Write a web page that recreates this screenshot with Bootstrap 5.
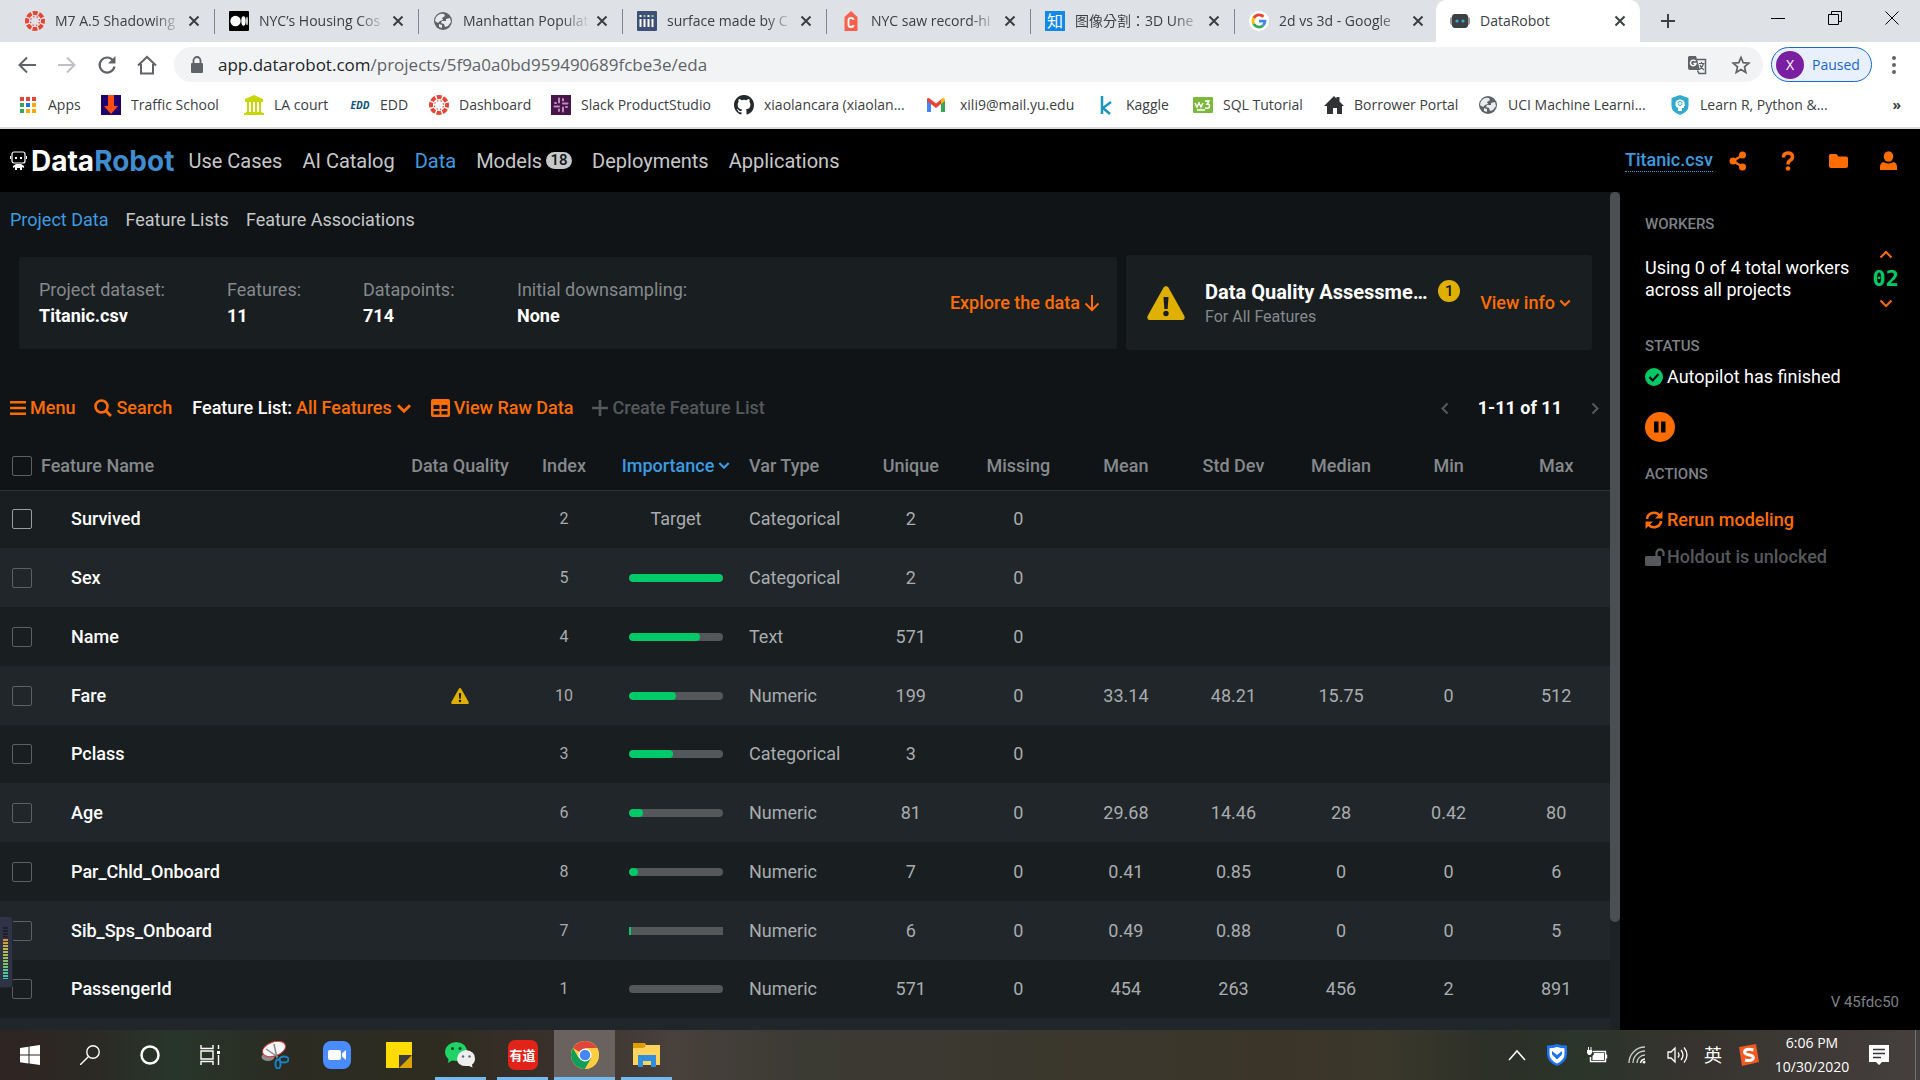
<!DOCTYPE html>
<html lang="en">
<head>
<meta charset="utf-8">
<meta name="viewport" content="width=device-width, initial-scale=1">
<title>DataRobot</title>
<link href="https://cdn.jsdelivr.net/npm/bootstrap@5.3.0/dist/css/bootstrap.min.css" rel="stylesheet">
<style>
:root{--orange:#ff6d00;--blue:#3b9ce0;--green:#00c968;--panel:#191e21;--page:#101417}
body{height:100vh;overflow:hidden;background:#000;font-family:Roboto,"Liberation Sans",sans-serif;font-size:18px;line-height:22px;color:#fff}
a{text-decoration:none;color:inherit}
svg{display:block;flex:none}
button{background:none;border:0;padding:0;color:inherit;font:inherit}
.os{font-family:"Open Sans","Noto Sans CJK TC",sans-serif}
/* browser */
.tabstrip{height:42px;background:#dee1e6;color:#3c4043;font-size:14px}
.btab{width:204px;height:42px;padding:0 4px 0 25px;position:relative}
.btab+.btab::before{content:"";position:absolute;left:10px;top:9px;width:1px;height:25px;background:#80868b}
.btab.now{background:#fff;border-radius:10px 10px 0 0;margin-left:8px;padding:0 14px}
.btab.now::before{display:none}
.tabtitle{flex:1;overflow:hidden;white-space:nowrap;margin:0 6px 0 10px}
.faded{-webkit-mask-image:linear-gradient(90deg,#000 78%,transparent);mask-image:linear-gradient(90deg,#000 78%,transparent)}
.favtext{width:20px;height:20px;font-size:16px;line-height:20px;text-align:center;flex:none;background:#0f88eb;color:#fff}
.newtab{padding:0 20px}
.wbtn{width:57px;height:36px;display:flex;align-items:center;justify-content:center;color:#000}
.toolbar{height:45px;background:#fff;color:#5f6368;padding:0 20px 0 16px}
.navbtns{gap:18px}
.omni{height:35px;border-radius:18px;background:#f1f3f4;padding:0 12px 0 14px}
.url{font-size:17px;flex:1}
.paused{height:35px;width:101px;border-radius:18px;border:1px solid #1967d2;background:#e8f0fe;color:#1967d2;font-size:14px}
.avatar{width:28px;height:28px;border-radius:50%;background:#7b1fa2;color:#fff;font-size:14px;line-height:28px;text-align:center}
.bookmarks{height:42px;background:#fff;border-bottom:2px solid #d9dce1;color:#3c4043;font-size:14px;padding:0 19px 4px 18px;display:grid;align-items:center;grid-template-columns:83px 143px 106px 79px 122px 183px 192px 170px 97px 131px 154px 192px 1fr auto;white-space:nowrap}
.bookmarks a{display:flex;align-items:center;gap:10px}
.bookmarks a.wide{gap:14px}
.edd{font:italic 700 10px/20px "Open Sans",sans-serif;color:#0b5573;width:20px;text-align:center}
/* application header */
.apphead{height:63px;background:#000;color:#c6c8c9;font-size:20px;padding-left:10px}
.brand{font:700 28px/28px Inter,sans-serif;color:#fff;margin:0 14px 0 4px}
.brand span{color:#3f8dcf}
.mainlinks{gap:20px}
.cnt{font-size:15px;line-height:17px;width:26px;border-radius:9px;background:#c6c8c9;color:#101417;text-align:center;font-weight:500}
.blue{color:var(--blue)}
.orange{color:var(--orange)}
.dotted{border-bottom:1px dotted var(--blue);font-size:18px;flex:none}
.headicons{width:295px;padding-right:7px}
.headicons button{width:50px;display:flex;justify-content:center}
/* main area */
.mainarea{background:var(--page);overflow:hidden}
.subnav{padding:17px 10px 0;color:#c6c8c9;height:63px;gap:17px}
.infobox{background:var(--panel);border-radius:3px}
.infobox dt{font-weight:400;color:#85898c;line-height:26px}
.infobox dd{margin:0;font-weight:700;line-height:26px}
.inforow{padding:0 18px 0 19px;gap:9px}
.facts{display:grid;grid-template-columns:188px 136px 154px 1fr;margin:0}
.dataset{height:92px;padding:0 17px 0 20px}
.dqa{width:466px;height:95px;padding:0 21px}
.dqtitle{font-size:20px;line-height:28px;font-weight:700}
.dqsub{font-size:16px;color:#85898c}
.md{font-weight:500}
.dim{color:#55595c}
.num1{width:22px;height:22px;border-radius:50%;background:#e0b000;color:#101417;font-size:15px;font-weight:500;text-align:center}
.tools{padding:0 10px;height:30px;margin-top:43px}
.tools>button+button{margin-left:19px}
.tools>span{margin:0 4px 0 20px}
.pagecount{padding:0 29px;font-weight:700}
.features{table-layout:fixed;width:100%;text-align:center;white-space:nowrap;margin-top:19px}
.features th{font-weight:500;color:#85898c;padding:0}
.features thead tr{height:48px;border-bottom:1px solid #2d3235}
.features tbody tr{height:59px;background:var(--panel)}
.features tbody tr:nth-child(even){background:#21262a}
.features tbody tr:nth-child(4n+1){height:58px}
.features tbody th{color:#fff;text-align:left}
.features th>div{display:flex;align-items:center;padding-left:12px}
.features thead label{padding-left:9px}
.features tbody label{padding-left:39px}
.features td{padding:0;color:#a9acae}
.features td.ix{font-size:16px}
.features th .form-check-input{width:20px;height:20px;margin:0;background-color:transparent;border:1px solid #5c6063;border-radius:2px;flex:none}
.features th .form-check-input.lit{border-color:#9a9d9f}
.features .lft{text-align:left;padding-left:1px}
.features .progress{height:8px;width:94px;border-radius:4px;background:#54585b;margin:0 auto}
.features .progress-bar{background:var(--green);border-radius:4px}
.c-name{width:396px}.c-dq{width:128px}.c-ix{width:80px}.c-imp{width:144px}.c-type{width:109px}
.scroll{width:10px;background:#1d2225}
.scroll div{height:730px;border-radius:5px;background:#4b4f52}
.side{width:300px;background:#000;padding:20px 21px 16px 25px}
.side h2{font-size:15px;line-height:24px;font-weight:500;color:#7d8184;margin:20px 0 0}
.side h2:first-child{margin:0}
.workers{margin-top:8px;height:70px}
.pause{margin-top:24px}
.rerun{margin-top:23px}
.holdout{margin-top:15px;gap:2px}
.version{font-size:15px;line-height:24px;color:#7d8184}
.digits{font:700 22px/24px "DejaVu Sans Mono",monospace;color:var(--green)}
/* desktop */
.edgewidget{position:absolute;left:0;top:916px;width:13px;height:72px;background:#2e3445;border:1px solid #20242f;border-left:0;border-radius:0 3px 3px 0;padding:10px 4px 8px 3px}
.edgewidget div{height:100%;background:repeating-linear-gradient(transparent 0 2px,#2e3445 2px 3px),linear-gradient(#1c202c 0 20%,#d68a35 22%,#c9b83e 40%,#8bc35a 65%,#35c5b0)}
.taskbar{height:50px;background:linear-gradient(90deg,#2f2421 0,#2b2a24 5%,#28362a 9%,#2b2b22 15%,#2e2c20 23%,#3a302b 29%,#48413c 35%,#3b3a33 42%,#3a3528 67%,#3a382b 72%,#2c2f27 78%,#2b3529 82%,#36332f 88%,#453f3d 100%)}
.tb{width:60px;height:50px;display:flex;align-items:center;justify-content:center}
.tb.app{width:62px}
.tb.open{border-bottom:3px solid #76b9ed;border-top:3px solid transparent;width:51px;margin:0 6px 0 5px}
.tb.open.cur{width:61px;margin:0 1px 0 0;background:#69625e;border-top-color:#69625e}
.youdao{width:30px;height:30px;border-radius:7px;background:#e2231a;color:#fff;font:700 13px/30px "Noto Sans CJK SC",sans-serif;text-align:center}
.tray{width:40px;display:flex;justify-content:center}
.ime{width:32px;font-size:18px;text-align:center}
.clock{font-size:14px;line-height:24px;width:86px;margin-right:3px;text-align:center}
.notes{width:58px;padding-right:16px;margin-right:4px}
</style>
<script src="https://cdn.jsdelivr.net/npm/bootstrap@5.3.0/dist/js/bootstrap.bundle.min.js"></script>
</head>
<body class="d-flex flex-column">
<svg width="0" height="0" class="position-absolute">
 <symbol id="x" viewBox="0 0 12 12"><path d="M1.500 1.500l9 9M10.500 1.500l-9 9" stroke="#3c4043" stroke-width="2"/></symbol>
 <symbol id="canvas" viewBox="0 0 20 20"><circle cx="10" cy="10" r="8" fill="none" stroke="#e64534" stroke-width="4" stroke-dasharray="4.800 1.483" stroke-dashoffset="2.400"/><circle cx="10" cy="10" r="4.500" fill="none" stroke="#e64534" stroke-width="1.300" stroke-dasharray="1.300 2.234" stroke-dashoffset="-1.100"/></symbol>
 <symbol id="globe" viewBox="0 0 20 20"><circle cx="10" cy="10" r="9" fill="#5f6368"/><path d="M4 5q3-3 7-2l1 2-3 2 1 2-3 1-2 2-3-2q0-3 2-5zM13 8l4-1 1 4-3 4-3 1-1-3-3-1 1-2 4 0zM6 13l3 1 0 3-3-1z" fill="#e9ebee"/></symbol>
 <symbol id="warn" viewBox="0 0 38 34"><path d="M16.600 1.600q2.400-3 4.800 0l16 28.400q1 3.800-2 4H2.600q-3-.2-2-4z" fill="#e0b000"/><path d="M16.500 11h5l-.8 12h-3.400z" fill="#191e21"/><circle cx="19" cy="27.500" r="2.700" fill="#191e21"/></symbol>
 <symbol id="down" viewBox="0 0 14 10"><path d="M1.500 2l5.500 5.500L12.500 2" fill="none" stroke="currentColor" stroke-width="2.500"/></symbol>
</svg>

<header class="os flex-shrink-0">
 <div class="tabstrip d-flex">
  <div class="btab d-flex align-items-center"><svg width="20" height="20"><use href="#canvas"/></svg><span class="tabtitle faded">M7 A.5 Shadowing</span><button aria-label="Close tab"><svg width="12" height="12"><use href="#x"/></svg></button></div>
  <div class="btab d-flex align-items-center"><svg width="20" height="20"><rect width="20" height="20" rx="1"/><circle cx="6.500" cy="10" r="5.200" fill="#fff"/><ellipse cx="14.500" cy="10" rx="2.200" ry="4.800" fill="#fff"/><ellipse cx="18" cy="10" rx=".8" ry="4.300" fill="#fff"/></svg><span class="tabtitle faded">NYC’s Housing Cos</span><button aria-label="Close tab"><svg width="12" height="12"><use href="#x"/></svg></button></div>
  <div class="btab d-flex align-items-center"><svg width="20" height="20"><use href="#globe"/></svg><span class="tabtitle faded">Manhattan Populat</span><button aria-label="Close tab"><svg width="12" height="12"><use href="#x"/></svg></button></div>
  <div class="btab d-flex align-items-center"><svg width="20" height="20"><rect width="20" height="20" rx="1" fill="#3f4f75"/><path d="M3.500 8v8M7.500 8v8M11.500 8v8M15.500 8v8M3.500 4v2M11.500 4v2" stroke="#fff" stroke-width="2"/><path d="M7.500 4v2M15.500 4v2" stroke="#80cfbe" stroke-width="2"/></svg><span class="tabtitle faded">surface made by C</span><button aria-label="Close tab"><svg width="12" height="12"><use href="#x"/></svg></button></div>
  <div class="btab d-flex align-items-center"><svg width="20" height="20"><path d="M3.500 6L10 0l6.500 6v14h-13z" fill="#f9604c"/><path d="M12.500 9q0-2-2.500-2T7.500 9v5q0 2 2.500 2t2.500-2" fill="none" stroke="#fff" stroke-width="1.800"/></svg><span class="tabtitle faded">NYC saw record-hi</span><button aria-label="Close tab"><svg width="12" height="12"><use href="#x"/></svg></button></div>
  <div class="btab d-flex align-items-center"><span class="favtext">知</span><span class="tabtitle faded">图像分割：3D Une</span><button aria-label="Close tab"><svg width="12" height="12"><use href="#x"/></svg></button></div>
  <div class="btab d-flex align-items-center"><svg width="20" height="20" viewBox="0 0 20 20"><circle cx="10" cy="10" r="10" fill="#fff"/><g fill="none" stroke-width="2.800"><path d="M14.500 5.800A6 6 0 0 0 4.800 7" stroke="#ea4335"/><path d="M4.800 7a6 6 0 0 0 0 6" stroke="#fbbc05"/><path d="M4.800 13a6 6 0 0 0 9.200 1.500" stroke="#34a853"/><path d="M14 14.500a6 6 0 0 0 2-4.400h-6" stroke="#4285f4"/></g></svg><span class="tabtitle faded">2d vs 3d - Google</span><button aria-label="Close tab"><svg width="12" height="12"><use href="#x"/></svg></button></div>
  <div class="btab now d-flex align-items-center"><svg width="20" height="20"><rect y="6" width="20" height="8" rx="2" fill="#999"/><rect x="2" y="3" width="16" height="14" rx="3" fill="#3c4043"/><circle cx="7" cy="10" r="1.600" fill="#36a9e1"/><circle cx="13" cy="10" r="1.600" fill="#36a9e1"/></svg><span class="tabtitle">DataRobot</span><button aria-label="Close tab"><svg width="12" height="12"><use href="#x"/></svg></button></div>
  <button class="newtab" aria-label="New tab"><svg width="16" height="16"><path d="M8 1v14M1 8h14" stroke="#3c4043" stroke-width="2"/></svg></button>
  <div class="d-flex ms-auto">
   <button class="wbtn" aria-label="Minimize"><svg width="14" height="14"><path d="M0 7.500h14" stroke="#000"/></svg></button>
   <button class="wbtn" aria-label="Restore"><svg width="14" height="14"><path d="M.5 3.500h10v10H.5zM3.500 3V.5h10v10H11" fill="none" stroke="#000"/></svg></button>
   <button class="wbtn" aria-label="Close"><svg width="14" height="14"><path d="M.5.5l13 13M13.500.5l-13 13" stroke="#000"/></svg></button>
  </div>
 </div>

 <div class="toolbar d-flex align-items-center">
  <div class="navbtns d-flex align-items-center">
   <button aria-label="Back"><svg width="22" height="20"><path d="M20 10H4M11 2.500L3.500 10 11 17.500" fill="none" stroke="#5f6368" stroke-width="2"/></svg></button>
   <button aria-label="Forward"><svg width="22" height="20"><path d="M2 10h16M11 2.500l7.500 7.500-7.500 7.500" fill="none" stroke="#bdc1c6" stroke-width="2"/></svg></button>
   <button aria-label="Reload"><svg width="22" height="20"><path d="M17.500 6A7.500 7.500 0 1 0 18.500 11.500" fill="none" stroke="#5f6368" stroke-width="2.200"/><path d="M19.500 1v7.500H12z" fill="#5f6368"/></svg></button>
   <button aria-label="Home"><svg width="22" height="20"><path d="M2 10.500L11 2l9 8.500M5 9v9.500h12V9" fill="none" stroke="#5f6368" stroke-width="2"/></svg></button>
  </div>
  <div class="omni d-flex align-items-center flex-grow-1 ms-3 me-2">
   <svg width="18" height="20"><rect x="3" y="8" width="12" height="10" rx="1" fill="#5f6368"/><path d="M5.500 8V5.500a3.500 3.500 0 0 1 7 0V8" fill="none" stroke="#5f6368" stroke-width="1.800"/></svg>
   <a class="url ps-2 ms-1" href="#"><span class="text-dark">app.datarobot.com</span>/projects/5f9a0a0bd959490689fcbe3e/eda</a>
   <button aria-label="Translate" class="me-4"><svg width="20" height="20"><path d="M2 1h7l4 14H3q-2 0-2-2V2z" fill="#5f6368"/><path d="M10 4.500h8.500v14H12l-1.500-3" fill="none" stroke="#5f6368" stroke-width="1.500"/><path d="M8.500 6.200A2.800 2.800 0 1 0 9 8.500H6.500" fill="none" stroke="#fff" stroke-width="1.400"/><path d="M12 8.500h5.500M14.500 7v1.500M16.500 8.500q-1 4-4 6M13 10q1 3 4 5" fill="none" stroke="#5f6368" stroke-width="1.200"/></svg></button>
   <button aria-label="Bookmark"><svg width="20" height="20"><path d="M10 2.500l2.200 5.200 5.600.5-4.300 3.700 1.300 5.500L10 14.500l-4.800 2.900 1.300-5.500L2.200 8.200l5.600-.5z" fill="none" stroke="#5f6368" stroke-width="1.700"/></svg></button>
  </div>
  <button class="paused d-flex align-items-center ps-1"><span class="avatar me-2">X</span><span>Paused</span></button>
  <button aria-label="Chrome menu" class="ps-3"><svg width="12" height="22"><g fill="#5f6368"><circle cx="6" cy="4" r="2"/><circle cx="6" cy="11" r="2"/><circle cx="6" cy="18" r="2"/></g></svg></button>
 </div>

 <nav class="bookmarks">
  <a href="#"><svg width="20" height="20"><path d="M2 2h4v4H2zM8 2h4v4H8zM14 2h4v4h-4z" fill="#ea4335"/><path d="M2 8h4v4H2z" fill="#34a853"/><path d="M8 8h4v4H8z" fill="#1a73e8"/><path d="M14 8h4v4h-4zM8 14h4v4H8zM14 14h4v4h-4z" fill="#fbaa05"/><path d="M2 14h4v4H2z" fill="#34a853"/></svg>Apps</a>
  <a href="#"><svg width="20" height="20"><rect width="20" height="20" fill="#21006e"/><path d="M7 0h6v11h4l-7 8-7-8h4z" fill="#ff4d12"/></svg>Traffic School</a>
  <a href="#"><svg width="20" height="20"><path d="M10 0l9 4v3H1V4zM2 17h16v1H2zM0 18h20v2H0zM3 7h2v10H3zM7 7h2v10H7zM11 7h2v10h-2zM15 7h2v10h-2z" fill="#c8d60a"/></svg>LA court</a>
  <a href="#"><span class="edd" aria-hidden="true">EDD</span>EDD</a>
  <a href="#"><svg width="20" height="20"><use href="#canvas"/></svg>Dashboard</a>
  <a href="#"><svg width="20" height="20"><rect width="20" height="20" fill="#481449"/><g stroke="#b98cb9" stroke-width="2" stroke-linecap="round"><path d="M8 3.500v4M12 8.500h4.500M12 12.500v4M3.500 11.500H8M12 4v1.500M15 12h1M8 14.500V16M4 8h1"/></g></svg>Slack ProductStudio</a>
  <a href="#"><svg width="20" height="20" viewBox="0 0 16 16"><path fill="#24292e" d="M8 0C3.580 0 0 3.580 0 8c0 3.540 2.290 6.530 5.470 7.590.4.070.55-.17.55-.38 0-.19-.01-.82-.01-1.490-2.010.37-2.530-.49-2.690-.94-.09-.23-.48-.94-.82-1.130-.28-.15-.68-.52-.01-.53.63-.01 1.080.58 1.230.82.72 1.210 1.870.87 2.330.66.070-.52.280-.87.510-1.070-1.780-.2-3.640-.89-3.640-3.950 0-.87.310-1.590.82-2.150-.08-.2-.36-1.020.08-2.120 0 0 .67-.21 2.200.82a7.600 7.600 0 0 1 4 0c1.530-1.040 2.200-.82 2.200-.82.440 1.100.160 1.920.080 2.120.510.560.820 1.270.820 2.150 0 3.070-1.870 3.750-3.650 3.950.290.250.540.730.540 1.480 0 1.070-.01 1.930-.01 2.200 0 .21.150.46.550.38A8 8 0 0 0 16 8c0-4.420-3.580-8-8-8z"/></svg>xiaolancara (xiaolan...</a>
  <a class="wide" href="#"><svg width="20" height="20"><path d="M1 5v12h4V8z" fill="#4285f4"/><path d="M19 5v12h-4V8z" fill="#34a853"/><path d="M1 3.500l2-.5 7 5.500L17 3l-2 6-5 4-9-7z" fill="#ea4335"/><path d="M15 5l2.500-2Q19 3 19 5v1l-4 3z" fill="#fbbc04"/></svg>xili9@mail.yu.edu</a>
  <a href="#"><svg width="20" height="20"><path d="M6 1v18M15 7l-8 6 7 6" fill="none" stroke="#1c95c0" stroke-width="2.500"/></svg>Kaggle</a>
  <a href="#"><svg width="20" height="20"><rect y="2" width="20" height="16" rx="1" fill="#7cb83b"/><path d="M2 8l2 4 2-4 2 4 2-4M12 6h4l-2 3q3 0 2.500 2.500T12 13M4 15h8" fill="none" stroke="#fff" stroke-width="1.500"/></svg>SQL Tutorial</a>
  <a href="#"><svg width="20" height="20"><path d="M10 1l2.500 2.500V2h3v4.500L20 11h-2v8h-5v-6H9v6H3v-8H0z" fill="#303236"/></svg>Borrower Portal</a>
  <a href="#"><svg width="20" height="20"><use href="#globe"/></svg>UCI Machine Learni...</a>
  <a href="#"><svg width="20" height="20"><path d="M10 0l8.500 3v8q0 6-8.500 9-8.500-3-8.500-9V3z" fill="#33aacc"/><path d="M8 16v-3q-3-1.500-2.500-5T10 4.500 14.500 8l.5 3h-1v2h-2v3z" fill="#fff"/><circle cx="10" cy="8.500" r="2" fill="none" stroke="#33aacc"/></svg>Learn R, Python &amp;...</a>
  <button class="fw-bold" aria-label="More bookmarks">»</button>
 </nav>
</header>

<nav class="apphead d-flex align-items-center flex-shrink-0">
 <svg width="17" height="20"><rect x="2" y="1" width="13" height="11" rx="2" fill="none" stroke="#fff" stroke-width="1.200"/><path d="M0 5h1v3H0zM16 5h1v3h-1zM5 6h2v2H5zM10 6h2v2h-2zM6 13h5l3 2v2l-2-1v3h-2v-2H7v2H5v-3l-2 1v-2z" fill="#fff"/></svg>
 <a class="brand" href="#">Data<span>Robot</span></a>
 <div class="mainlinks d-flex align-items-center">
  <a href="#">Use Cases</a><a href="#">AI Catalog</a><a class="blue" href="#">Data</a>
  <a class="d-flex align-items-center gap-1" href="#">Models <span class="cnt">18</span></a>
  <a href="#">Deployments</a><a href="#">Applications</a>
 </div>
 <div class="headicons ms-auto d-flex align-items-center justify-content-between orange">
  <a class="blue md dotted" href="#">Titanic.csv</a>
  <div class="d-flex align-items-center">
   <button aria-label="Share"><svg width="18" height="20"><path d="M14 4L4 10l10 6" fill="none" stroke="currentColor" stroke-width="2.500"/><g fill="currentColor"><circle cx="13.500" cy="4" r="3.500"/><circle cx="4" cy="10" r="3.500"/><circle cx="13.500" cy="16" r="3.500"/></g></svg></button>
   <button aria-label="Help"><svg width="14" height="20"><path d="M2.500 6.500Q2.500 2 7 2t4.500 4q0 2.200-2.500 3.500Q7 10.700 7 13.500" fill="none" stroke="currentColor" stroke-width="3.500"/><circle cx="7" cy="17.500" r="2.300" fill="currentColor"/></svg></button>
   <button aria-label="Files"><svg width="19" height="16"><path d="M1.500 1h6l2 2.500H17q2 0 2 2V13q0 2-2 2H2q-2 0-2-2V2.500Q0 1 1.500 1z" fill="currentColor"/></svg></button>
   <button aria-label="Account"><svg width="17" height="20"><ellipse cx="8.500" cy="5.500" rx="4.800" ry="5.200" fill="currentColor"/><path d="M3.500 11q5 3 10 0 3.500 1 3.500 5v3H0v-3q0-4 3.500-5z" fill="currentColor"/></svg></button>
  </div>
 </div>
</nav>

<div class="d-flex flex-grow-1 overflow-hidden">
 <main class="mainarea flex-grow-1">
  <nav class="subnav d-flex"><a class="blue" href="#">Project Data</a><a href="#">Feature Lists</a><a href="#">Feature Associations</a></nav>
  <div class="inforow d-flex align-items-center">
   <section class="infobox dataset d-flex align-items-center flex-grow-1">
    <dl class="facts flex-grow-1">
     <div><dt>Project dataset:</dt><dd>Titanic.csv</dd></div>
     <div><dt>Features:</dt><dd>11</dd></div>
     <div><dt>Datapoints:</dt><dd>714</dd></div>
     <div><dt>Initial downsampling:</dt><dd>None</dd></div>
    </dl>
    <button class="orange md d-flex align-items-center gap-1">Explore the data <svg width="16" height="18"><path d="M8 1v15M1.500 9.500L8 16l6.500-6.500" fill="none" stroke="currentColor" stroke-width="2"/></svg></button>
   </section>
   <section class="infobox dqa d-flex align-items-center">
    <svg width="38" height="34"><use href="#warn"/></svg>
    <div class="ps-3 ms-1 me-auto"><div class="dqtitle">Data Quality Assessme…</div><div class="dqsub">For All Features</div></div>
    <span class="num1 mb-4">1</span>
    <button class="orange md d-flex align-items-center gap-1 ps-3 ms-1">View info <svg width="12" height="10"><use href="#down"/></svg></button>
   </section>
  </div>

  <div class="tools d-flex align-items-center md orange">
   <button class="d-flex align-items-center gap-1"><svg width="16" height="16"><path d="M0 2.200h16M0 8h16M0 13.800h16" stroke="currentColor" stroke-width="2.600"/></svg>Menu</button>
   <button class="d-flex align-items-center gap-1"><svg width="18" height="18"><circle cx="7.500" cy="7.500" r="6" fill="none" stroke="currentColor" stroke-width="2.600"/><path d="M12 12l5 5" stroke="currentColor" stroke-width="3"/></svg>Search</button>
   <span class="text-white">Feature List:</span>
   <button class="d-flex align-items-center gap-1">All Features <svg width="16" height="11"><use href="#down"/></svg></button>
   <button class="d-flex align-items-center gap-1"><svg width="19" height="18"><path d="M2 0h15q2 0 2 2v14q0 2-2 2H2q-2 0-2-2V2Q0 0 2 0zM2.500 6V10h6V6zm8 0V10h6V6zm-8 6V15.500h6v-3.500zm8 0V15.500h6v-3.500z" fill="currentColor" fill-rule="evenodd"/></svg>View Raw Data</button>
   <button class="dim d-flex align-items-center gap-1" disabled><svg width="16" height="16"><path d="M8 0v16M0 8h16" stroke="currentColor" stroke-width="2.600"/></svg>Create Feature List</button>
   <div class="ms-auto d-flex align-items-center text-white">
    <button class="dim" aria-label="Previous page"><svg width="9" height="13"><path d="M7.500 1.500l-5 5 5 5" fill="none" stroke="currentColor" stroke-width="2"/></svg></button>
    <span class="pagecount">1-11 of 11</span>
    <button class="dim" aria-label="Next page"><svg width="9" height="13"><path d="M1.500 1.500l5 5-5 5" fill="none" stroke="currentColor" stroke-width="2"/></svg></button>
   </div>
  </div>

  <table class="features">
   <colgroup><col class="c-name"><col class="c-dq"><col class="c-ix"><col class="c-imp"><col class="c-type"><col><col><col><col><col><col><col></colgroup>
   <thead><tr>
    <th><div><input id="all" type="checkbox" class="form-check-input"><label for="all">Feature Name</label></div></th>
    <th>Data Quality</th><th>Index</th><th><button class="blue d-inline-flex align-items-center gap-1">Importance <svg width="12" height="9"><use href="#down"/></svg></button></th><th class="lft">Var Type</th><th>Unique</th><th>Missing</th><th>Mean</th><th>Std Dev</th><th>Median</th><th>Min</th><th>Max</th>
   </tr></thead>
   <tbody>
    <tr><th><div><input id="f1" type="checkbox" class="form-check-input lit"><label for="f1">Survived</label></div></th><td></td><td class="ix">2</td><td>Target</td><td class="lft">Categorical</td><td>2</td><td>0</td><td></td><td></td><td></td><td></td><td></td></tr>
    <tr><th><div><input id="f2" type="checkbox" class="form-check-input"><label for="f2">Sex</label></div></th><td></td><td class="ix">5</td><td><div class="progress"><div class="progress-bar" style="width:100%"></div></div></td><td class="lft">Categorical</td><td>2</td><td>0</td><td></td><td></td><td></td><td></td><td></td></tr>
    <tr><th><div><input id="f3" type="checkbox" class="form-check-input"><label for="f3">Name</label></div></th><td></td><td class="ix">4</td><td><div class="progress"><div class="progress-bar" style="width:76%"></div></div></td><td class="lft">Text</td><td>571</td><td>0</td><td></td><td></td><td></td><td></td><td></td></tr>
    <tr><th><div><input id="f4" type="checkbox" class="form-check-input"><label for="f4">Fare</label></div></th><td><svg class="mx-auto" width="18" height="16"><use href="#warn"/></svg></td><td class="ix">10</td><td><div class="progress"><div class="progress-bar" style="width:50%"></div></div></td><td class="lft">Numeric</td><td>199</td><td>0</td><td>33.14</td><td>48.21</td><td>15.75</td><td>0</td><td>512</td></tr>
    <tr><th><div><input id="f5" type="checkbox" class="form-check-input"><label for="f5">Pclass</label></div></th><td></td><td class="ix">3</td><td><div class="progress"><div class="progress-bar" style="width:47%"></div></div></td><td class="lft">Categorical</td><td>3</td><td>0</td><td></td><td></td><td></td><td></td><td></td></tr>
    <tr><th><div><input id="f6" type="checkbox" class="form-check-input"><label for="f6">Age</label></div></th><td></td><td class="ix">6</td><td><div class="progress"><div class="progress-bar" style="width:15%"></div></div></td><td class="lft">Numeric</td><td>81</td><td>0</td><td>29.68</td><td>14.46</td><td>28</td><td>0.42</td><td>80</td></tr>
    <tr><th><div><input id="f7" type="checkbox" class="form-check-input"><label for="f7">Par_Chld_Onboard</label></div></th><td></td><td class="ix">8</td><td><div class="progress"><div class="progress-bar" style="width:10%"></div></div></td><td class="lft">Numeric</td><td>7</td><td>0</td><td>0.41</td><td>0.85</td><td>0</td><td>0</td><td>6</td></tr>
    <tr><th><div><input id="f8" type="checkbox" class="form-check-input"><label for="f8">Sib_Sps_Onboard</label></div></th><td></td><td class="ix">7</td><td><div class="progress rounded-0"><div class="progress-bar rounded-0" style="width:2%"></div></div></td><td class="lft">Numeric</td><td>6</td><td>0</td><td>0.49</td><td>0.88</td><td>0</td><td>0</td><td>5</td></tr>
    <tr><th><div><input id="f9" type="checkbox" class="form-check-input"><label for="f9">PassengerId</label></div></th><td></td><td class="ix">1</td><td><div class="progress"></div></td><td class="lft">Numeric</td><td>571</td><td>0</td><td>454</td><td>263</td><td>456</td><td>2</td><td>891</td></tr>
    <tr><td colspan="12"></td></tr>
   </tbody>
  </table>
 </main>
 <div class="scroll flex-shrink-0"><div></div></div>
 <aside class="side d-flex flex-column flex-shrink-0">
  <h2>WORKERS</h2>
  <div class="workers d-flex justify-content-between align-items-center">
   <div>Using 0 of 4 total workers<br>across all projects</div>
   <div class="d-flex flex-column align-items-center orange gap-2">
    <button aria-label="More workers"><svg width="14" height="10"><path d="M1.500 8.500L7 3l5.500 5.500" fill="none" stroke="currentColor" stroke-width="2"/></svg></button>
    <span class="digits">02</span>
    <button aria-label="Fewer workers"><svg width="14" height="10"><path d="M1.500 1.500L7 7l5.500-5.500" fill="none" stroke="currentColor" stroke-width="2"/></svg></button>
   </div>
  </div>
  <h2>STATUS</h2>
  <div class="d-flex align-items-center gap-1 mt-2"><svg width="18" height="18"><circle cx="9" cy="9" r="9" fill="#00c968"/><path d="M4.500 9l3.200 3.500 5.800-6.500" fill="none" stroke="#000" stroke-width="2"/></svg>Autopilot has finished</div>
  <button aria-label="Pause" class="pause align-self-start"><svg width="30" height="30"><circle cx="15" cy="15" r="15" fill="#ff6d00"/><path d="M9 9.500h4.500v11H9zM16 9.500h4.500v11H16z" fill="#000"/></svg></button>
  <h2>ACTIONS</h2>
  <button class="rerun orange md d-flex align-items-center gap-1"><svg width="18" height="18"><path d="M2 8a7 7 0 0 1 12.500-3.500M16 10a7 7 0 0 1-12.500 3.500" fill="none" stroke="currentColor" stroke-width="2.500"/><path d="M17.500 0v7.500H10zM.5 18v-7.500H8z" fill="currentColor"/></svg>Rerun modeling</button>
  <div class="holdout dim md d-flex align-items-center"><svg width="20" height="18"><rect y="8" width="16" height="10" rx="1.500" fill="currentColor"/><path d="M11.500 8V5a3.500 3.500 0 0 1 7 0v3" fill="none" stroke="currentColor" stroke-width="2.300"/></svg>Holdout is unlocked</div>
  <div class="version mt-auto text-end">V 45fdc50</div>
 </aside>
</div>

<div class="edgewidget"><div></div></div>

<footer class="taskbar os d-flex align-items-center flex-shrink-0">
 <button class="tb" aria-label="Start"><svg width="20" height="20"><path d="M0 3l8.500-1.300V9.500H0zM9.500 1.500L20 0v9.500H9.500zM0 10.500h8.500v8L0 17.300zM9.500 10.500H20V20L9.500 18.600z" fill="#fff"/></svg></button>
 <button class="tb" aria-label="Search"><svg width="20" height="20"><circle cx="13" cy="7" r="6.200" fill="none" stroke="#fff" stroke-width="1.400"/><path d="M8.500 11.500L0 20" stroke="#fff" stroke-width="1.400"/></svg></button>
 <button class="tb" aria-label="Cortana"><svg width="20" height="20"><circle cx="10" cy="10" r="8.500" fill="none" stroke="#fff" stroke-width="2.500"/></svg></button>
 <button class="tb" aria-label="Task view"><svg width="21" height="20"><path d="M1 0v3.500h12V0M1 20v-3.500h12V20M1 6h12v8H1zM18.500 0v4M18.500 10v10" fill="none" stroke="#fff" stroke-width="1.400"/><path d="M17 6h3v3h-3z" fill="#fff"/></svg></button>
 <button class="tb app ms-1" aria-label="Snipping Tool"><svg width="28" height="28"><ellipse cx="7" cy="16" rx="6.500" ry="4" fill="#8d8d8d"/><ellipse cx="13" cy="8" rx="12" ry="7" transform="rotate(-20 13 8)" fill="#f7f7f7" stroke="#d43b3b"/><path d="M5 8l12 8M13 3l3 14" stroke="#888" stroke-width="1.500"/><g fill="none" stroke="#1a82c4" stroke-width="2"><ellipse cx="23" cy="18.500" rx="4.500" ry="3"/><ellipse cx="17" cy="23" rx="2.500" ry="4.500"/></g></svg></button>
 <button class="tb app" aria-label="Zoom"><svg width="28" height="28"><rect width="28" height="28" rx="8" fill="#4a8cff"/><rect x="5" y="9" width="13" height="10" rx="2" fill="#fff"/><path d="M19 12.500l4-3.500v10l-4-3.500z" fill="#fff"/></svg></button>
 <button class="tb app" aria-label="Sticky Notes"><svg width="26" height="26"><path d="M0 0h26v26H0z" fill="#ffdb00"/><path d="M13 26V13h13v13z" fill="#d9a500"/><path d="M13 13h13L13 26z" fill="#3b3b3b"/></svg></button>
 <button class="tb open" aria-label="WeChat"><svg width="31" height="26"><path d="M11 0Q22 1 22 10t-11 9l-4-.5L3 21l.5-4Q0 14 0 9.500 1 1 11 0z" fill="#20d366"/><circle cx="7.500" cy="6.500" r="1.500" fill="#124c28"/><circle cx="15" cy="6.500" r="1.500" fill="#124c28"/><path d="M21 8q9 1 9 8.500 0 4-3 6l.5 3-3.500-1.500Q12 25 12 16.500 13 9 21 8z" fill="#eee"/><circle cx="18" cy="14.500" r="1.200" fill="#666"/><circle cx="24.500" cy="14.500" r="1.200" fill="#666"/></svg></button>
 <button class="tb open" aria-label="Youdao Dictionary"><span class="youdao">有道</span></button>
 <button class="tb open cur" aria-label="Chrome"><svg width="28" height="28" viewBox="0 0 28 28"><circle cx="14" cy="14" r="14" fill="#ffcd40"/><path d="M14 14L1.900 7A14 14 0 0 1 26.100 7z" fill="#e0453a"/><path d="M1.900 7A14 14 0 0 0 14 28l6-10.500-6-3.500-6 3.500z" fill="#109d58"/><path d="M14 7h12.100A14 14 0 0 1 14 28l6-10.500z" fill="#ffcd40"/><circle cx="14" cy="14" r="6.500" fill="#fff"/><circle cx="14" cy="14" r="5.300" fill="#4587f3"/></svg></button>
 <button class="tb open" aria-label="File Explorer"><svg width="28" height="24"><path d="M0 0h12l2 3h-3v6H0z" fill="#e09b00"/><path d="M0 5h10l3-3h14v20H0z" fill="#ffd35c"/><path d="M5 12h18v12h-5v-6h-8v6H5z" fill="#2f8ee0"/></svg></button>

 <div class="d-flex align-items-center ms-auto text-white h-100">
  <div class="tray"><svg width="18" height="12"><path d="M1 11l8-9 8 9" fill="none" stroke="#fff" stroke-width="1.500"/></svg></div>
  <div class="tray"><svg width="20" height="22"><path d="M10 0q5 1.500 10 1.500V10q0 8-10 12Q0 18 0 10V1.500q5 0 10-1.500z" fill="#1e73f0"/><path d="M10 3q4 1.200 7.500 1.200V10q0 6-7.500 9.500Q2.500 16 2.500 10V4.200q3.500 0 7.500-1.200z" fill="#fff"/><path d="M5 7l5 4 5-4v3.500l-5 5-5-5z" fill="#1e73f0"/></svg></div>
  <div class="tray"><svg width="21" height="16"><path d="M5.500 4.500h13v10H3.500V10M19.500 7.500v4" fill="none" stroke="#fff" stroke-width="1.400"/><path d="M7 6h10v7H5.500v-4Q7 8 7 6zM0 3h5v3L3.500 8h-2L0 6zM1 0h1v3H1zM3.500 0h1v3h-1z" fill="#fff"/></svg></div>
  <div class="tray"><svg width="18" height="18"><path d="M1 17A16 16 0 0 1 17 1M5 17A12 12 0 0 1 17 5M9 17A8 8 0 0 1 17 9" fill="none" stroke="#ccc" stroke-width="1.300"/><path d="M12.500 17A5 5 0 0 1 17 13" fill="none" stroke="#fff" stroke-width="1.500"/><circle cx="16" cy="16" r="1.500" fill="#fff"/></svg></div>
  <div class="tray"><svg width="21" height="18"><path d="M1 6h3l4-4v14l-4-4H1z" fill="none" stroke="#fff" stroke-width="1.300"/><path d="M11 6.500q2 2.500 0 5M14 4q4 5 0 10M17 1.500q6 7.500 0 15" fill="none" stroke="#fff" stroke-width="1.300"/></svg></div>
  <div class="ime">英</div>
  <div class="tray"><svg width="20" height="22"><path d="M0 3l17-3 3 18-17 4z" fill="#f05a22"/><path d="M14.500 6Q6 4 5.500 8q0 2 5 3t3.500 4q-2 2.500-8 1" fill="none" stroke="#fff" stroke-width="3"/></svg></div>
  <div class="clock">6:06 PM<br>10/30/2020</div>
  <button class="notes border-end border-secondary h-100" aria-label="Notifications"><svg class="mx-auto" width="20" height="20"><path d="M0 0h20v17h-7l-3 3-3-3H0z" fill="#fff"/><path d="M4 4.500h12M4 8.500h12M4 12.500h8" stroke="#3a3634" stroke-width="1.300"/></svg></button>
 </div>
</footer>
</body>
</html>
